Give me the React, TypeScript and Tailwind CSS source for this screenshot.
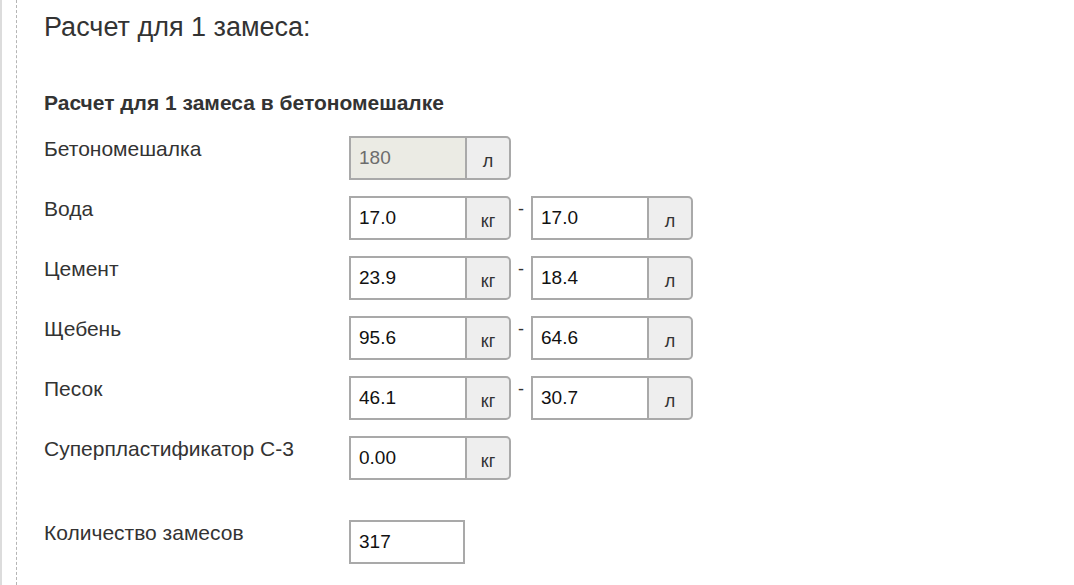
const rows = [
  { label: "Бетономешалка", kg: "180", kgUnit: "л", disabled: true },
  { label: "Вода", kg: "17.0", l: "17.0" },
  { label: "Цемент", kg: "23.9", l: "18.4" },
  { label: "Щебень", kg: "95.6", l: "64.6" },
  { label: "Песок", kg: "46.1", l: "30.7" },
  { label: "Суперпластификатор С-3", kg: "0.00" },
];

function UnitInput({
  value,
  unit,
  disabled,
}: {
  value: string;
  unit: string;
  disabled?: boolean;
}) {
  return (
    <div className="flex h-[44px] w-[162px]">
      <input
        readOnly
        value={value}
        className={
          "h-full w-[116px] border-2 border-r-0 border-[#a9a9a9] px-[8px] text-[19px] outline-none " +
          (disabled ? "bg-[#ebebe4] text-[#6d6d6d]" : "bg-white text-[#111]")
        }
      />
      <span className="flex h-full w-[46px] items-center justify-center rounded-r-[5px] border-2 border-[#a9a9a9] bg-[#eeeeee] pt-[7px] text-[18px] text-[#333]">
        {unit}
      </span>
    </div>
  );
}

export default function App() {
  return (
    <div className="flex min-h-screen bg-white font-['Liberation_Sans',Arial,sans-serif] text-[#333]">
      <div className="w-[2px] shrink-0 bg-[#dcdcdc]" />
      <div className="ml-[14px] flex-1 border-l border-dashed border-[#b5b5b5] pl-[27px]">
        <h2 className="pt-[10px] text-[27px] leading-[34px]">Расчет для 1 замеса:</h2>
        <h3 className="mt-[47px] text-[21px] font-bold leading-[24px]">
          Расчет для 1 замеса в бетономешалке
        </h3>
        <div className="mt-[21px] flex flex-col gap-[16px]">
          {rows.map((r) => (
            <div key={r.label} className="flex">
              <div className="w-[305px] pt-[1px] text-[21px] leading-[24px]">{r.label}</div>
              <UnitInput value={r.kg} unit={r.kgUnit ?? "кг"} disabled={r.disabled} />
              {r.l && (
                <>
                  <span className="w-[20px] pt-[2px] text-center text-[18px] leading-[22px]">-</span>
                  <UnitInput value={r.l} unit="л" />
                </>
              )}
            </div>
          ))}
        </div>
        <div className="mt-[40px] flex">
          <div className="w-[305px] pt-[1px] text-[21px] leading-[24px]">Количество замесов</div>
          <input
            readOnly
            value="317"
            className="h-[44px] w-[116px] border-2 border-[#a9a9a9] px-[8px] text-[19px] text-[#111] outline-none"
          />
        </div>
      </div>
    </div>
  );
}
